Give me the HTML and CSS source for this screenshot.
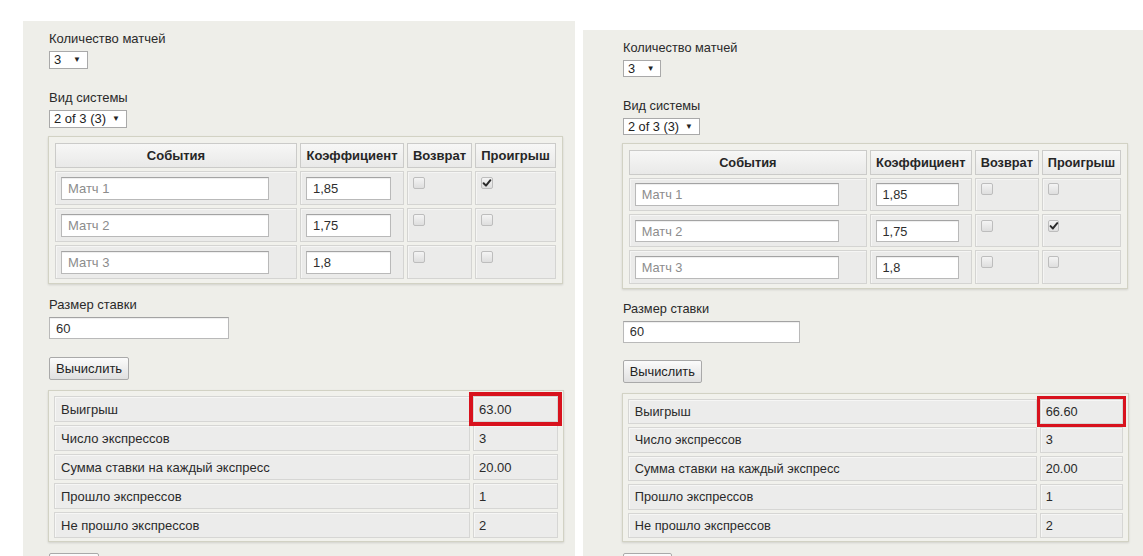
FILE: index.html
```html
<!DOCTYPE html>
<html lang="ru">
<head>
<meta charset="utf-8">
<title>Калькулятор систем</title>
<link rel="stylesheet" href="styles.css">
</head>
<body>
<div class="page">
  <section class="panel panel-a">
    <div class="calc">
      <div class="field">
        <label class="label">Количество матчей</label>
        <span class="select select-count">3<span class="caret">▼</span></span>
      </div>
      <div class="field field-tight">
        <label class="label">Вид системы</label>
        <span class="select select-system">2 of 3 (3)<span class="caret">▼</span></span>
      </div>
      <div class="events">
        <div class="hcell">События</div>
        <div class="hcell">Коэффициент</div>
        <div class="hcell">Возврат</div>
        <div class="hcell">Проигрыш</div>

        <div class="cell"><input class="input input-event" placeholder="Матч 1"></div>
        <div class="cell"><input class="input input-coef" value="1,85"></div>
        <div class="cell"><span class="check"></span></div>
        <div class="cell"><span class="check is-checked"><svg viewBox="0 0 12 12" width="12" height="12"><path d="M2.6 6.2 L5 8.6 L9.4 3.2" fill="none" stroke="#2b2b2b" stroke-width="2" stroke-linecap="round" stroke-linejoin="round"/></svg></span></div>

        <div class="cell"><input class="input input-event" placeholder="Матч 2"></div>
        <div class="cell"><input class="input input-coef" value="1,75"></div>
        <div class="cell"><span class="check"></span></div>
        <div class="cell"><span class="check"></span></div>

        <div class="cell"><input class="input input-event" placeholder="Матч 3"></div>
        <div class="cell"><input class="input input-coef" value="1,8"></div>
        <div class="cell"><span class="check"></span></div>
        <div class="cell"><span class="check"></span></div>
      </div>
      <div class="field field-stake">
        <label class="label">Размер ставки</label>
        <input class="input input-stake" value="60">
      </div>
      <button class="btn btn-calc">Вычислить</button>
      <div class="results">
        <div class="rcell">Выигрыш</div><div class="rcell rvalue is-marked">63.00</div>
        <div class="rcell">Число экспрессов</div><div class="rcell rvalue">3</div>
        <div class="rcell">Сумма ставки на каждый экспресс</div><div class="rcell rvalue">20.00</div>
        <div class="rcell">Прошло экспрессов</div><div class="rcell rvalue">1</div>
        <div class="rcell">Не прошло экспрессов</div><div class="rcell rvalue">2</div>
      </div>
      <button class="btn btn-reset" aria-label="Сброс"></button>
    </div>
  </section>

  <section class="panel panel-b">
    <div class="calc">
      <div class="field">
        <label class="label">Количество матчей</label>
        <span class="select select-count">3<span class="caret">▼</span></span>
      </div>
      <div class="field field-tight">
        <label class="label">Вид системы</label>
        <span class="select select-system">2 of 3 (3)<span class="caret">▼</span></span>
      </div>
      <div class="events">
        <div class="hcell">События</div>
        <div class="hcell">Коэффициент</div>
        <div class="hcell">Возврат</div>
        <div class="hcell">Проигрыш</div>

        <div class="cell"><input class="input input-event" placeholder="Матч 1"></div>
        <div class="cell"><input class="input input-coef" value="1,85"></div>
        <div class="cell"><span class="check"></span></div>
        <div class="cell"><span class="check"></span></div>

        <div class="cell"><input class="input input-event" placeholder="Матч 2"></div>
        <div class="cell"><input class="input input-coef" value="1,75"></div>
        <div class="cell"><span class="check"></span></div>
        <div class="cell"><span class="check is-checked"><svg viewBox="0 0 12 12" width="12" height="12"><path d="M2.6 6.2 L5 8.6 L9.4 3.2" fill="none" stroke="#2b2b2b" stroke-width="2" stroke-linecap="round" stroke-linejoin="round"/></svg></span></div>

        <div class="cell"><input class="input input-event" placeholder="Матч 3"></div>
        <div class="cell"><input class="input input-coef" value="1,8"></div>
        <div class="cell"><span class="check"></span></div>
        <div class="cell"><span class="check"></span></div>
      </div>
      <div class="field field-stake">
        <label class="label">Размер ставки</label>
        <input class="input input-stake" value="60">
      </div>
      <button class="btn btn-calc">Вычислить</button>
      <div class="results">
        <div class="rcell">Выигрыш</div><div class="rcell rvalue is-marked">66.60</div>
        <div class="rcell">Число экспрессов</div><div class="rcell rvalue">3</div>
        <div class="rcell">Сумма ставки на каждый экспресс</div><div class="rcell rvalue">20.00</div>
        <div class="rcell">Прошло экспрессов</div><div class="rcell rvalue">1</div>
        <div class="rcell">Не прошло экспрессов</div><div class="rcell rvalue">2</div>
      </div>
      <button class="btn btn-reset" aria-label="Сброс"></button>
    </div>
  </section>
</div>
</body>
</html>
```
FILE: styles.css
```css
html, body {
  margin: 0;
  height: 556px;
  overflow: hidden;
  background: #ffffff;
}
body {
  font-family: "Liberation Sans", Arial, sans-serif;
  font-size: 13px;
  color: #2e2e2e;
}
.page {
  display: flex;
  align-items: flex-start;
  gap: 8px;
  padding-left: 23px;
}
.panel {
  background: #eeeee9;
  height: 620px;
  box-sizing: border-box;
  padding-top: 10px;
}
.panel-a {
  margin-top: 21px;
  width: 552px;
  padding-left: 25px;
}
.panel-b {
  margin-top: 30px;
  flex: 1;
  padding-left: 39px;
}
.panel-b .calc {
  zoom: 0.983;
}
.calc {
  display: flex;
  flex-direction: column;
  align-items: flex-start;
}
.field {
  display: flex;
  flex-direction: column;
  align-items: flex-start;
  margin-bottom: 21px;
  padding-left: 1px;
}
.field-tight {
  margin-bottom: 8px;
}
.field-stake {
  margin-top: 13px;
  margin-bottom: 18px;
}
.label {
  display: block;
  line-height: 16px;
  margin-bottom: 4px;
  color: #2a2a2a;
}
.select {
  display: inline-flex;
  align-items: center;
  box-sizing: border-box;
  height: 18px;
  border: 1px solid #a9a9a9;
  background: #ffffff;
  padding: 0 6px 0 4px;
  color: #222;
  line-height: 16px;
}
.select-count { width: 39px; }
.select-system { width: 78px; }
.caret {
  margin-left: auto;
  font-size: 8px;
  color: #222;
}

.events {
  display: grid;
  grid-template-columns: 242px 104px 65px 81px;
  grid-template-rows: 25px repeat(3, 34px);
  gap: 3px;
  padding: 6px 6px 4px;
  border: 1px solid #d2d2c4;
  background: #f1f1ec;
  box-shadow: 0 1px 2px rgba(0, 0, 0, 0.12);
}
.hcell {
  display: flex;
  align-items: center;
  justify-content: center;
  border: 1px solid #cbcbc9;
  background: linear-gradient(#f7f7f6, #e9e9e8);
  font-weight: bold;
  color: #262626;
}
.cell {
  border: 1px solid #d4d4d2;
  background: #ebebea;
  box-shadow: inset 1px 1px 0 #f5f5f4;
  padding: 5px;
  box-sizing: border-box;
}
.input {
  display: block;
  box-sizing: border-box;
  height: 23px;
  margin: 0;
  padding: 0 6px;
  border: 1px solid #b9b9b9;
  border-top-color: #a3a3a3;
  box-shadow: inset 0 1px 1px rgba(0, 0, 0, 0.07);
  background: #ffffff;
  font: inherit;
  color: #2e2e2e;
  outline: none;
}
.input::placeholder {
  color: #8c8c8c;
}
.input-event { width: 208px; }
.input-coef { width: 85px; }
.input-stake { width: 180px; height: 22px; }

.check {
  display: block;
  width: 12px;
  height: 12px;
  box-sizing: border-box;
  border: 1px solid #bdbdbd;
  border-radius: 2px;
  background: linear-gradient(#f4f4f4, #dedede);
  position: relative;
}
.check svg {
  position: absolute;
  left: -1px;
  top: -1px;
}

.btn {
  box-sizing: border-box;
  height: 23px;
  margin: 0;
  padding: 0 6px;
  border: 1px solid #a9a9a9;
  border-radius: 2px;
  background: linear-gradient(#fbfbfb, #e0e0e0);
  font: inherit;
  color: #222;
}
.btn-calc {
  width: 80px;
  margin-left: 1px;
}
.btn-reset {
  width: 50px;
  margin-top: 11px;
  margin-left: 1px;
}

.results {
  margin-top: 10px;
  display: grid;
  grid-template-columns: 416px 85px;
  grid-template-rows: repeat(5, 26px);
  gap: 3px;
  padding: 5px 5px 3px;
  border: 1px solid #d2d2c4;
  background: #f1f1ec;
  box-shadow: 0 1px 2px rgba(0, 0, 0, 0.12);
}
.rcell {
  display: flex;
  align-items: center;
  padding-left: 6px;
  border: 1px solid #d6d6d4;
  background: #ececeb;
  box-shadow: inset 1px 1px 0 #f6f6f5;
  color: #2a2a2a;
}
.rvalue {
  padding-left: 5px;
}
.is-marked {
  position: relative;
  z-index: 1;
  outline: 4px solid #d8121d;
  outline-offset: 0;
}
```
